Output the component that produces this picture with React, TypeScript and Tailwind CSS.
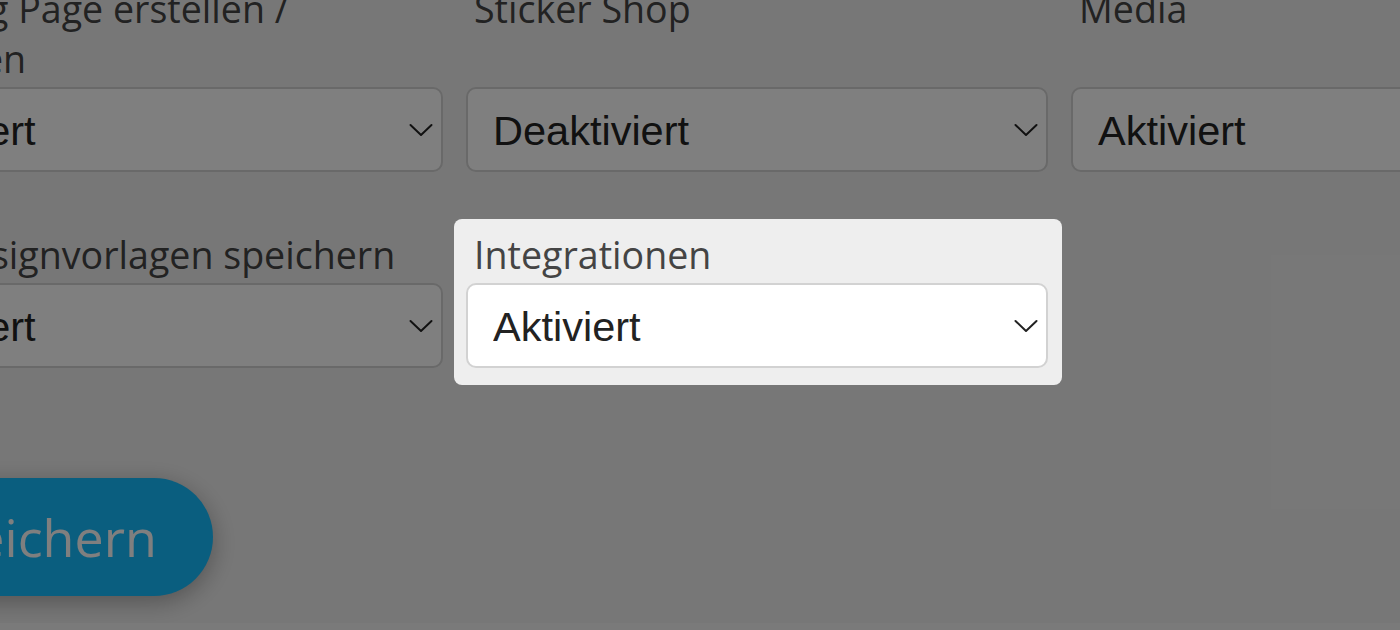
import { useState } from 'react';

type Field = {
	id: string;
	label: string;
	value: string;
};

const options = ['Aktiviert', 'Deaktiviert'];

const rows: Field[][] = [
	[
		{ id: 'landing', label: 'Landing Page erstellen / editieren', value: 'Aktiviert' },
		{ id: 'sticker', label: 'Sticker Shop', value: 'Deaktiviert' },
		{ id: 'media', label: 'Media', value: 'Aktiviert' },
	],
	[
		{ id: 'templates', label: 'Alle Designvorlagen speichern', value: 'Aktiviert' },
		{ id: 'integrations', label: 'Integrationen', value: 'Aktiviert' },
	],
];

function Chevron() {
	return (
		<svg
			className="pointer-events-none absolute right-[10px] top-1/2 -translate-y-1/2"
			width="24"
			height="13"
			viewBox="0 0 24 13"
			fill="none"
		>
			<path d="M1.5 1.5 L12 11.5 L22.5 1.5" stroke="#222222" strokeWidth="2" strokeLinecap="round" strokeLinejoin="round" />
		</svg>
	);
}

function SelectField({ field, highlighted }: { field: Field; highlighted?: boolean }) {
	const [value, setValue] = useState(field.value);

	return (
		<div className={`flex flex-col justify-between ${highlighted ? 'relative z-20' : ''}`}>
			{/* Tour highlight box behind the active field */}
			{highlighted && (
				<span className="absolute -left-3 -right-[14px] -top-[11px] -bottom-[17px] -z-10 rounded-lg bg-[#eeeeee]" />
			)}
			<label
				htmlFor={field.id}
				className="mb-[3px] pl-2 font-['Open_Sans',sans-serif] text-[37.6px] leading-[50px] text-[#444444]"
			>
				{field.label}
			</label>
			<div className="relative">
				<select
					id={field.id}
					value={value}
					onChange={(e) => setValue(e.target.value)}
					className="h-[85px] w-full appearance-none rounded-[10px] border-2 border-[#d2d2d2] bg-white pl-[25px] pt-[3px] font-['Liberation_Sans',Arial,sans-serif] text-[41.5px] text-[#222222] outline-none"
				>
					{options.map((o) => (
						<option key={o} value={o}>
							{o}
						</option>
					))}
				</select>
				<Chevron />
			</div>
		</div>
	);
}

export default function App() {
	return (
		<div className="relative flex h-[630px] w-[1400px] flex-col overflow-hidden bg-[#f4f4f4]">
			{/* Settings card */}
			<div className="h-[623px] shrink-0 overflow-hidden bg-[#efefef]">
				<div className="ml-[-139px] mt-[-16px] grid w-max grid-cols-[582px_582px_582px] gap-x-[23px] gap-y-[58px]">
					{rows[0].map((f) => (
						<SelectField key={f.id} field={f} />
					))}
					{rows[1].map((f) => (
						<SelectField key={f.id} field={f} highlighted={f.id === 'integrations'} />
					))}
				</div>

				<button
					type="button"
					className="ml-[-141px] mt-[110px] h-[118px] rounded-full bg-[#14bcfe] px-[56px] font-['Open_Sans',sans-serif] text-[52px] text-white shadow-[0_6px_24px_rgba(0,0,0,0.3)]"
				>
					Speichern
				</button>
			</div>
			<div className="flex-1" />

			{/* Tour overlay */}
			<div className="pointer-events-none absolute inset-0 z-10 bg-black/50" />
		</div>
	);
}
